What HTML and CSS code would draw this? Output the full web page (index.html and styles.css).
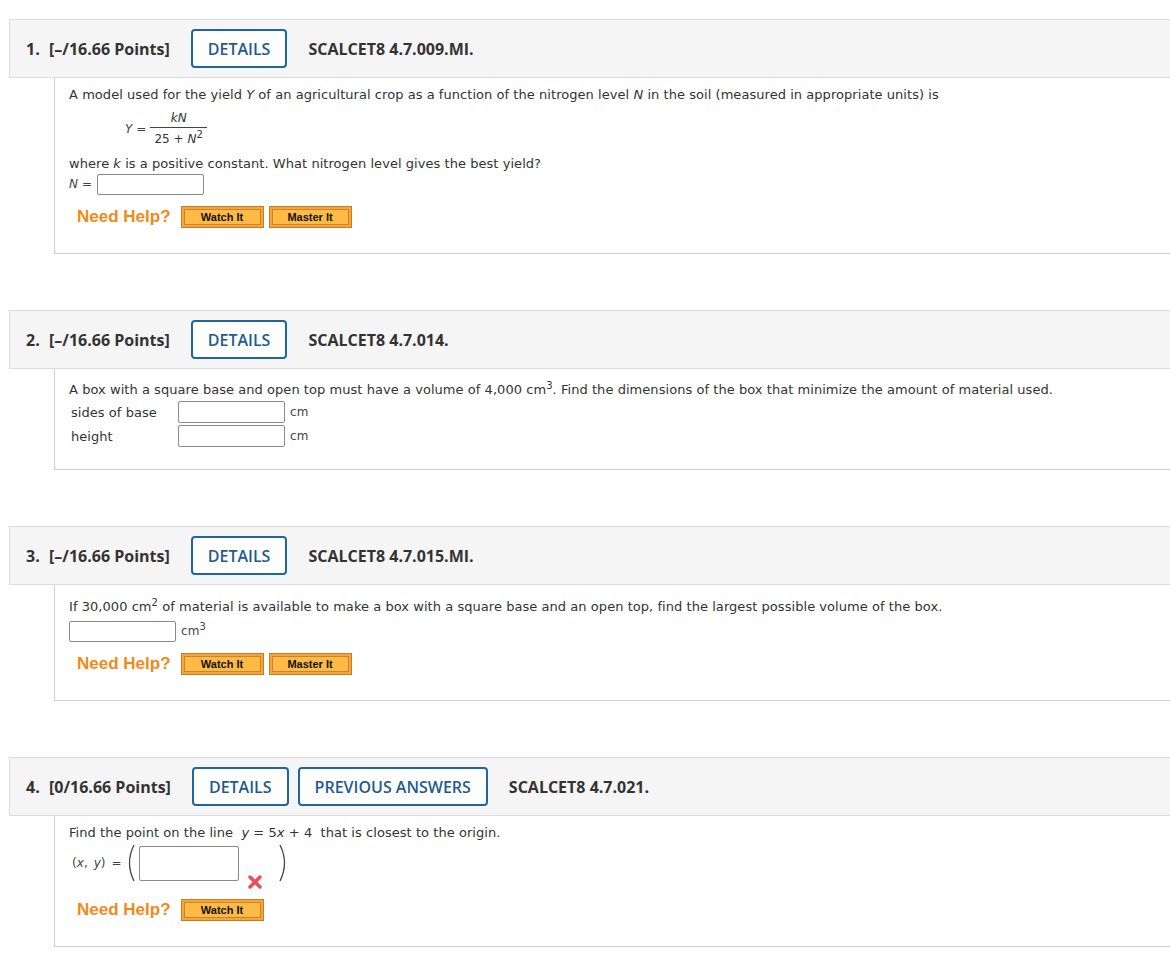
FILE: index.html
```html
<!DOCTYPE html>
<html>
<head>
<meta charset="utf-8">
<link rel="stylesheet" href="styles.css">
</head>
<body>
<div class="page">

  <section class="question">
    <div class="qhead">
      <span class="num">1.</span>
      <span class="pts">[–/16.66 Points]</span>
      <span class="obtn">DETAILS</span>
      <span class="code">SCALCET8 4.7.009.MI.</span>
    </div>
    <div class="qbody q1">
      <p class="line">A model used for the yield <i>Y</i> of an agricultural crop as a function of the nitrogen level <i>N</i> in the soil (measured in appropriate units) is</p>
      <div class="formula">
        <span class="math"><i>Y</i> =</span>
        <span class="frac">
          <span class="fnum"><i>kN</i></span>
          <span class="fden">25 + <i>N</i><sup>2</sup></span>
        </span>
      </div>
      <p class="line where">where <i>k</i> is a positive constant. What nitrogen level gives the best yield?</p>
      <div class="ansrow">
        <span class="math"><i>N</i> =</span>
        <span class="inp w107"></span>
      </div>
      <div class="help">
        <span class="needhelp">Need Help?</span>
        <span class="hbtn"><span>Watch It</span></span>
        <span class="hbtn"><span>Master It</span></span>
      </div>
    </div>
  </section>

  <section class="question">
    <div class="qhead">
      <span class="num">2.</span>
      <span class="pts">[–/16.66 Points]</span>
      <span class="obtn">DETAILS</span>
      <span class="code">SCALCET8 4.7.014.</span>
    </div>
    <div class="qbody q2">
      <p class="line">A box with a square base and open top must have a volume of 4,000 cm<sup>3</sup>. Find the dimensions of the box that minimize the amount of material used.</p>
      <div class="dimgrid">
        <span class="lbl">sides of base</span><span class="inp w106"></span><span class="unit">cm</span>
        <span class="lbl">height</span><span class="inp w106"></span><span class="unit">cm</span>
      </div>
    </div>
  </section>

  <section class="question">
    <div class="qhead">
      <span class="num">3.</span>
      <span class="pts">[–/16.66 Points]</span>
      <span class="obtn">DETAILS</span>
      <span class="code">SCALCET8 4.7.015.MI.</span>
    </div>
    <div class="qbody q3">
      <p class="line">If 30,000 cm<sup>2</sup> of material is available to make a box with a square base and an open top, find the largest possible volume of the box.</p>
      <div class="ansrow r3">
        <span class="inp w107"></span>
        <span class="unit">cm<sup>3</sup></span>
      </div>
      <div class="help">
        <span class="needhelp">Need Help?</span>
        <span class="hbtn"><span>Watch It</span></span>
        <span class="hbtn"><span>Master It</span></span>
      </div>
    </div>
  </section>

  <section class="question">
    <div class="qhead">
      <span class="num">4.</span>
      <span class="pts">[0/16.66 Points]</span>
      <span class="obtn">DETAILS</span>
      <span class="obtn prev">PREVIOUS ANSWERS</span>
      <span class="code">SCALCET8 4.7.021.</span>
    </div>
    <div class="qbody q4">
      <p class="line">Find the point on the line &nbsp;<i>y</i> = 5<i>x</i> + 4&nbsp; that is closest to the origin.</p>
      <div class="pointrow">
        <span class="math xy">(<i>x</i>, <i>y</i>) =</span>
        <svg class="paren" width="12" height="38" viewBox="0 0 12 38"><path d="M10 1 Q1 19 10 37" fill="none" stroke="#444" stroke-width="1.3"/></svg>
        <span class="inp big"></span>
        <svg class="xmark" width="14" height="14" viewBox="0 0 14 14"><path d="M2 2 L12 12 M12 2 L2 12" stroke="#ee4b55" stroke-width="3.4" stroke-linecap="round"/></svg>
        <svg class="paren rp" width="12" height="38" viewBox="0 0 12 38"><path d="M2 1 Q11 19 2 37" fill="none" stroke="#444" stroke-width="1.3"/></svg>
      </div>
      <div class="help h4">
        <span class="needhelp">Need Help?</span>
        <span class="hbtn"><span>Watch It</span></span>
      </div>
    </div>
  </section>

</div>
</body>
</html>
```

FILE: styles.css
```css
html, body {
  margin: 0;
  padding: 0;
  background: #ffffff;
  overflow: hidden;
}

.page {
  padding: 19px 0 0 9px;
  font-family: "DejaVu Sans", Verdana, sans-serif;
  font-size: 13px;
  color: #333;
  letter-spacing: 0.05px;
}

.question {
  margin-bottom: 56px;
}

.qhead {
  display: flex;
  align-items: center;
  height: 57px;
  background: #f5f5f5;
  border: 1px solid #dcdcdc;
  border-right: none;
  padding-left: 16px;
  font-family: "Open Sans", "Liberation Sans", sans-serif;
  font-weight: 700;
  font-size: 16px;
  letter-spacing: 0;
  color: #333;
}

.num {
  width: 23px;
}

.pts {
  margin-right: 21px;
}

.obtn {
  display: flex;
  align-items: center;
  justify-content: center;
  box-sizing: border-box;
  height: 39px;
  padding: 0 15px;
  border: 2px solid #1e66a0;
  border-radius: 4px;
  background: #fff;
  color: #1f5b8d;
  font-weight: 600;
  margin-right: 21px;
  letter-spacing: 0;
}

.obtn.prev {
  margin-left: -12px;
}

.qbody {
  margin-left: 45px;
  border-left: 1px solid #cfcfcf;
  border-bottom: 1px solid #cfcfcf;
  padding: 8px 0 25px 14px;
}

.qbody.q2 { padding-top: 12px; padding-bottom: 22px; }
.qbody.q3 { padding-top: 13px; padding-bottom: 25px; }
.qbody.q4 { padding-top: 8px; }

.line {
  margin: 0;
  line-height: 18px;
  white-space: nowrap;
}

sup {
  font-size: 10px;
  line-height: 0;
  vertical-align: 5px;
}

i {
  font-style: italic;
}

.formula {
  display: flex;
  align-items: center;
  margin: 5px 0 0 56px;
  font-size: 12px;
}

.math {
  font-size: 12px;
  color: #444;
}

.frac {
  display: inline-flex;
  flex-direction: column;
  align-items: stretch;
  margin-left: 4px;
  text-align: center;
}

.fnum {
  padding: 0 4px;
  line-height: 18px;
  border-bottom: 1px solid #444;
}

.fden {
  padding: 3px 4px 0;
  line-height: 17px;
}

.where {
  margin-top: 7px;
}

.ansrow {
  display: flex;
  align-items: center;
  height: 22px;
}

.ansrow .math {
  margin-right: 5px;
}

.ansrow.r3 {
  margin-top: 4px;
}

.inp {
  display: inline-block;
  box-sizing: border-box;
  height: 21px;
  border: 1px solid #8a8a8a;
  border-radius: 2px;
  background: #fff;
}

.w107 { width: 107px; }
.w106 { width: 107px; height: 22px; }

.unit {
  margin-left: 5px;
  font-size: 12px;
  color: #444;
}

.dimgrid {
  display: grid;
  grid-template-columns: 109px 107px auto;
  grid-auto-rows: 22px;
  row-gap: 2px;
  align-items: center;
  margin-top: 2px;
}

.lbl {
  padding-left: 2px;
  color: #333;
}

.dimgrid .unit {
  justify-self: start;
}

.help {
  display: flex;
  align-items: center;
  height: 22px;
  margin-top: 11px;
  padding-left: 8px;
}

.help.h4 {
  margin-top: 18px;
}

.needhelp {
  font-family: "Liberation Sans", Arial, sans-serif;
  font-weight: 700;
  font-size: 17px;
  letter-spacing: 0;
  color: #f08a18;
  margin-right: 10px;
}

.hbtn {
  display: inline-flex;
  box-sizing: border-box;
  width: 83px;
  height: 22px;
  padding: 2px;
  background: #f5a53a;
  border: 1px solid #c97b27;
  margin-right: 5px;
}

.hbtn span {
  flex: 1;
  display: flex;
  align-items: center;
  justify-content: center;
  border: 1px solid #c8842e;
  background: #fdbb45;
  font-family: "Liberation Sans", Arial, sans-serif;
  font-weight: 700;
  font-size: 11px;
  letter-spacing: 0;
  color: #111;
}

.pointrow {
  display: flex;
  align-items: center;
  height: 36px;
  margin-top: 3px;
}

.xy {
  margin-left: 3px;
  margin-right: 3px;
  word-spacing: 2px;
}

.paren {
  display: block;
}

.inp.big {
  width: 100px;
  height: 35px;
  margin-left: 3px;
}

.xmark {
  align-self: flex-end;
  margin: 0 16px -8px 9px;
}
```
